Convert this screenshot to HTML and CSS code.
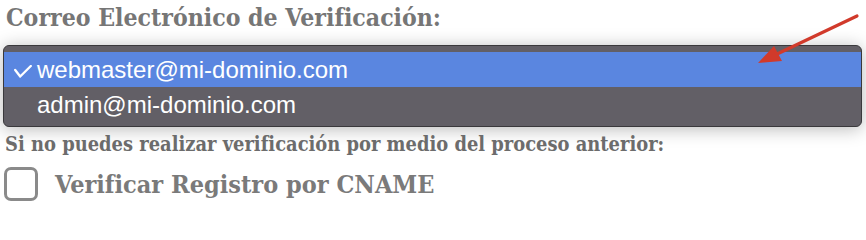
FILE: index.html
```html
<!DOCTYPE html>
<html lang="es">
<head>
<meta charset="utf-8">
<title>Correo de verificación</title>
<link rel="stylesheet" href="styles.css">
</head>
<body>
<div class="page">
  <h2 class="title">Correo Electrónico de Verificación:</h2>
  <div class="menu">
    <div class="option selected"><span class="check"><svg width="18" height="13" viewBox="0 0 18 13"><polyline points="1.2,5 6.2,11.5 16.8,1" fill="none" stroke="#ffffff" stroke-width="2.3" stroke-linecap="round" stroke-linejoin="round"/></svg></span><span>webmaster@mi-dominio.com</span></div>
    <div class="option"><span class="check"></span><span>admin@mi-dominio.com</span></div>
  </div>
  <p class="note">Si no puedes realizar verificación por medio del proceso anterior:</p>
  <label class="cname"><span class="box"></span><span>Verificar Registro por CNAME</span></label>
  <svg class="arrow" width="866" height="208" viewBox="0 0 866 208">
    <line x1="857" y1="16" x2="775" y2="55" stroke="#d13a2b" stroke-width="3.2" stroke-linecap="round"/>
    <polygon points="758,63 774,46 782,61" fill="#d13a2b"/>
  </svg>
</div>
</body>
</html>
```
FILE: styles.css
```css
html, body {
  margin: 0;
  padding: 0;
  background: #ffffff;
}
.page {
  position: relative;
  width: 866px;
  height: 208px;
  overflow: hidden;
  font-family: "DejaVu Serif", serif;
}
.title {
  margin: 0;
  padding: 3px 0 0 6px;
  height: 45px;
  box-sizing: border-box;
  font-size: 24.6px;
  font-weight: bold;
  font-stretch: condensed;
  line-height: 30px;
  color: #767676;
}
.menu {
  margin: 0 4px 0 3px;
  height: 82px;
  box-sizing: border-box;
  padding: 6px 0 5px;
  border: 1px solid #3a393c;
  border-radius: 6px;
  background: #625f66;
  box-shadow: 0 2px 18px rgba(0, 0, 0, 0.28);
  font-family: "Liberation Sans", Arial, sans-serif;
  font-size: 24px;
  color: #ffffff;
}
.option {
  display: flex;
  align-items: center;
  height: 34px;
  padding-top: 1px;
  box-sizing: border-box;
}
.selected {
  height: 35px;
  background: #5a86e0;
}
.check {
  display: flex;
  align-items: center;
  width: 23px;
  padding-left: 10px;
  margin-top: 2px;
}
.note {
  margin: 0;
  padding: 4px 0 0 5px;
  height: 40px;
  box-sizing: border-box;
  font-size: 19.9px;
  font-weight: bold;
  font-stretch: condensed;
  line-height: 26px;
  color: #6c6c6c;
}
.cname {
  display: flex;
  align-items: center;
  gap: 17px;
  padding-left: 4px;
  font-size: 25px;
  font-weight: bold;
  font-stretch: condensed;
  color: #7a7a7a;
}
.box {
  width: 34px;
  height: 34px;
  box-sizing: border-box;
  border: 3px solid #8a8a8a;
  border-radius: 7px;
}
.arrow {
  position: absolute;
  left: 0;
  top: 0;
  pointer-events: none;
}
```
